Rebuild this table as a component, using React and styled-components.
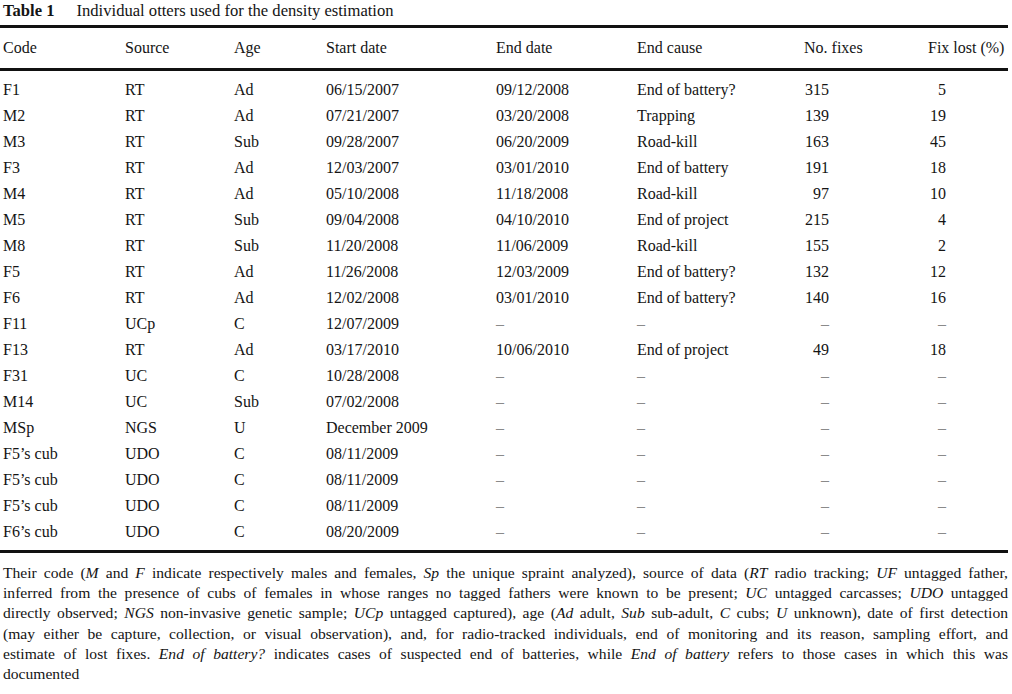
import React from 'react';
import styled, { createGlobalStyle } from 'styled-components';

const GlobalStyle = createGlobalStyle`
  body {
    margin: 0;
    background: #ffffff;
    color: #141414;
    font-family: 'Liberation Serif', 'Times New Roman', serif;
  }
`;

const COLUMNS = '122px 109px 92px 170px 141px 167px 124px 80px';

const rows = [
  ['F1', 'RT', 'Ad', '06/15/2007', '09/12/2008', 'End of battery?', '315', '5'],
  ['M2', 'RT', 'Ad', '07/21/2007', '03/20/2008', 'Trapping', '139', '19'],
  ['M3', 'RT', 'Sub', '09/28/2007', '06/20/2009', 'Road-kill', '163', '45'],
  ['F3', 'RT', 'Ad', '12/03/2007', '03/01/2010', 'End of battery', '191', '18'],
  ['M4', 'RT', 'Ad', '05/10/2008', '11/18/2008', 'Road-kill', '97', '10'],
  ['M5', 'RT', 'Sub', '09/04/2008', '04/10/2010', 'End of project', '215', '4'],
  ['M8', 'RT', 'Sub', '11/20/2008', '11/06/2009', 'Road-kill', '155', '2'],
  ['F5', 'RT', 'Ad', '11/26/2008', '12/03/2009', 'End of battery?', '132', '12'],
  ['F6', 'RT', 'Ad', '12/02/2008', '03/01/2010', 'End of battery?', '140', '16'],
  ['F11', 'UCp', 'C', '12/07/2009', '–', '–', '–', '–'],
  ['F13', 'RT', 'Ad', '03/17/2010', '10/06/2010', 'End of project', '49', '18'],
  ['F31', 'UC', 'C', '10/28/2008', '–', '–', '–', '–'],
  ['M14', 'UC', 'Sub', '07/02/2008', '–', '–', '–', '–'],
  ['MSp', 'NGS', 'U', 'December 2009', '–', '–', '–', '–'],
  ['F5’s cub', 'UDO', 'C', '08/11/2009', '–', '–', '–', '–'],
  ['F5’s cub', 'UDO', 'C', '08/11/2009', '–', '–', '–', '–'],
  ['F5’s cub', 'UDO', 'C', '08/11/2009', '–', '–', '–', '–'],
  ['F6’s cub', 'UDO', 'C', '08/20/2009', '–', '–', '–', '–'],
];

const headers = ['Code', 'Source', 'Age', 'Start date', 'End date', 'End cause', 'No. fixes', 'Fix lost (%)'];

const Page = styled.div`
  width: 1005px;
  padding: 0 4px 0 3px;
`;

const Title = styled.div`
  font-size: 16.6px;
  line-height: 22px;
  height: 22px;
  display: flex;
  gap: 22px;
`;

const Label = styled.span`
  font-weight: bold;
`;

const Rule = styled.div`
  height: 3px;
  background: #111;
  margin-left: -3px;
  margin-top: ${(p) => p.$top || 0}px;
`;

const HeadRow = styled.div`
  display: grid;
  grid-template-columns: ${COLUMNS};
  height: 40px;
  align-items: center;
  font-size: 16px;
`;

const Body = styled.div`
  padding: 6px 0 5px;
`;

const Row = styled.div`
  display: grid;
  grid-template-columns: ${COLUMNS};
  height: 26px;
  align-items: center;
  font-size: 16px;
  line-height: 20px;
`;

const Cell = styled.div`
  white-space: nowrap;
  text-align: ${(p) => (p.$pad ? 'right' : 'left')};
  padding-right: ${(p) => p.$pad || 0}px;
  color: ${(p) => (p.$dash ? '#8a8a8a' : 'inherit')};
`;

const Caption = styled.div`
  margin-top: 10px;
  font-size: 15.6px;
  line-height: 20.2px;
`;

const Line = styled.div`
  white-space: nowrap;
  text-align: justify;
  text-align-last: ${(p) => (p.$last ? 'left' : 'justify')};
`;

const padFor = (i) => (i === 6 ? 99 : i === 7 ? 62 : 0);

export default function App() {
  return (
    <Page>
      <GlobalStyle />
      <Title>
        <Label>Table 1</Label>
        <span>Individual otters used for the density estimation</span>
      </Title>
      <Rule $top={3} />
      <HeadRow>
        {headers.map((h) => (
          <Cell key={h}>{h}</Cell>
        ))}
      </HeadRow>
      <Rule />
      <Body>
        {rows.map((r, ri) => (
          <Row key={ri}>
            {r.map((c, i) => (
              <Cell key={i} $pad={padFor(i)} $dash={c === '–'}>
                {c}
              </Cell>
            ))}
          </Row>
        ))}
      </Body>
      <Rule />
      <Caption>
        <Line>
          Their code (<i>M</i> and <i>F</i> indicate respectively males and females, <i>Sp</i> the unique spraint analyzed), source of data (<i>RT</i> radio tracking; <i>UF</i> untagged father,
        </Line>
        <Line>
          inferred from the presence of cubs of females in whose ranges no tagged fathers were known to be present; <i>UC</i> untagged carcasses; <i>UDO</i> untagged
        </Line>
        <Line>
          directly observed; <i>NGS</i> non-invasive genetic sample; <i>UCp</i> untagged captured), age (<i>Ad</i> adult, <i>Sub</i> sub-adult, <i>C</i> cubs; <i>U</i> unknown), date of first detection
        </Line>
        <Line>
          (may either be capture, collection, or visual observation), and, for radio-tracked individuals, end of monitoring and its reason, sampling effort, and
        </Line>
        <Line>
          estimate of lost fixes. <i>End of battery?</i> indicates cases of suspected end of batteries, while <i>End of battery</i> refers to those cases in which this was
        </Line>
        <Line $last>documented</Line>
      </Caption>
    </Page>
  );
}
